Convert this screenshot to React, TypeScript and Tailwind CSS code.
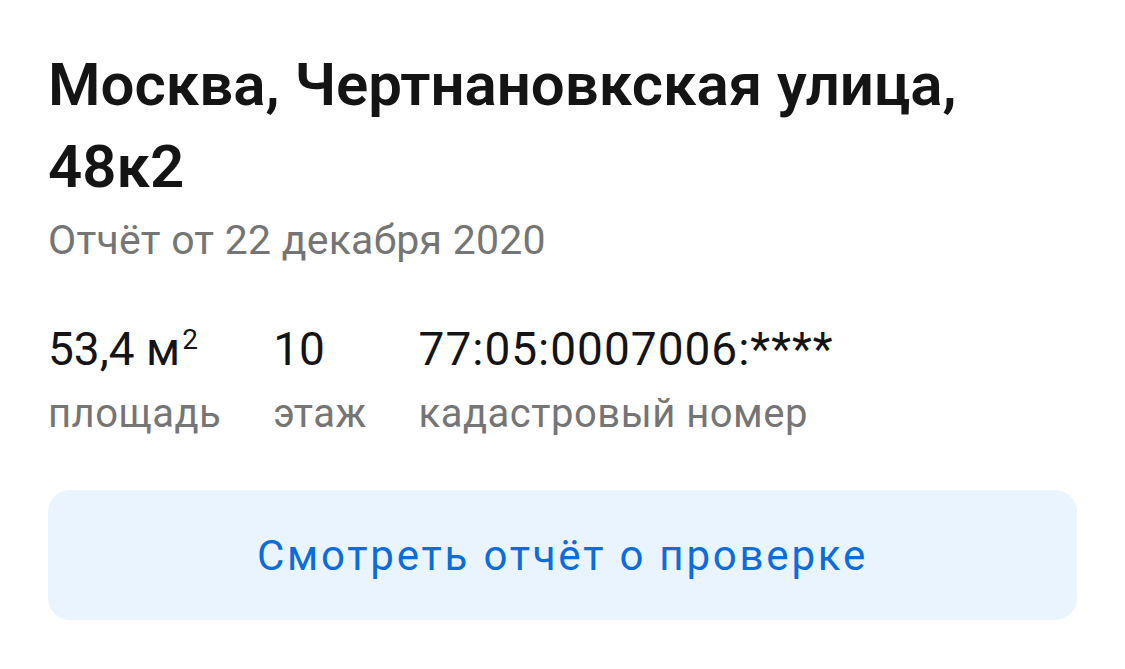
import React from "react";

const stats = [
  {
    value: (
      <>
        53,4 м<span className="text-[28px] leading-none align-[16px] ml-[2px]">2</span>
      </>
    ),
    label: "площадь",
    tracking: "",
  },
  { value: "10", label: "этаж", tracking: "" },
  { value: "77:05:0007006:****", label: "кадастровый номер", tracking: "tracking-[1px]" },
];

export default function App() {
  return (
    <div className="min-h-screen bg-white px-12 pt-[44px] font-['Roboto',sans-serif]">
      <h1 className="text-[60px] leading-[82px] font-semibold text-[#141414]">
        Москва, Чертнановкская улица,
        <br />
        48к2
      </h1>
      <p className="mt-[8px] text-[41px] leading-[48px] tracking-[0.25px] text-[#757575]">
        Отчёт от 22 декабря 2020
      </p>

      <div className="mt-[59px] flex gap-[52px]">
        {stats.map((s, i) => (
          <div key={i} className="flex flex-col">
            <span className={`text-[46px] leading-[52px] text-[#141414] ${s.tracking}`}>{s.value}</span>
            <span className="mt-[15px] text-[40px] leading-[48px] tracking-[0.5px] text-[#757575]">
              {s.label}
            </span>
          </div>
        ))}
      </div>

      <button className="mt-[52px] w-full h-[130px] rounded-[22px] bg-[#eaf4fe] text-[42px] tracking-[2.8px] text-[#0b6ddd] flex items-center justify-center">
        Смотреть отчёт о проверке
      </button>
    </div>
  );
}
